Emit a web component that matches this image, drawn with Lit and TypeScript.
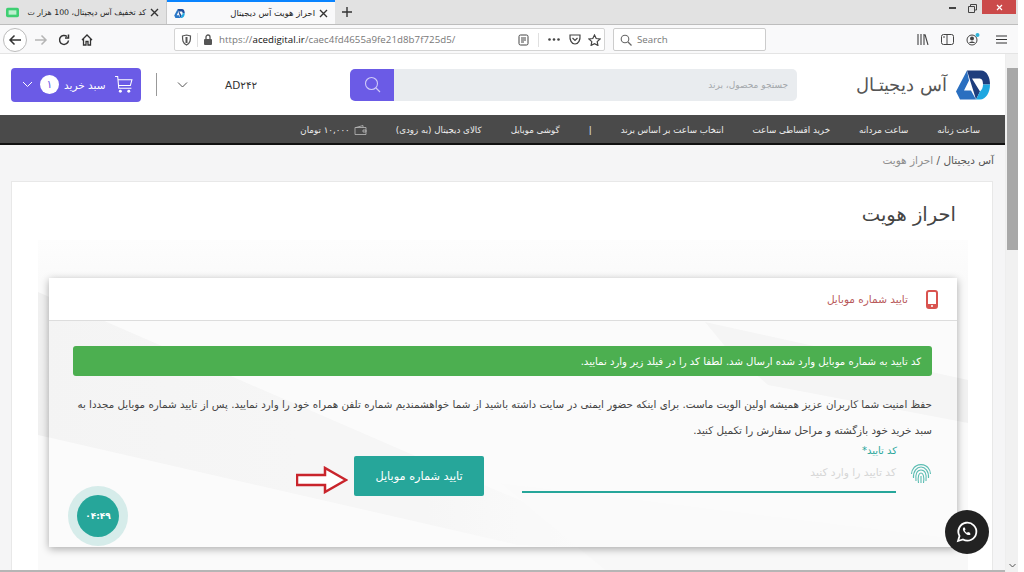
import { LitElement, html, css, svg } from "lit";
import { customElement } from "lit/decorators.js";

const x = svg`<path d="M2 2l7 7M9 2l-7 7" stroke="#333" stroke-width="1.4" fill="none"/>`;

@customElement("app-root")
export class AppRoot extends LitElement {
  static styles = css`
    :host { display: block; width: 1024px; height: 572px; overflow: hidden; background: #fff; font-family: "DejaVu Sans", sans-serif; position: relative; }
    svg { display: block; flex: none; }
    .win { width: 1018px; height: 572px; display: flex; flex-direction: column; }
    .tabs { height: 24px; background: #e2e2e2; display: flex; align-items: stretch; flex: none; position: relative; }
    .tab { width: 167px; display: flex; align-items: center; gap: 3px; padding: 0 6px; box-sizing: border-box; font-size: 8.5px; color: #222; border-right: 1px solid #c9c9c9; white-space: nowrap; overflow: hidden; }
    .tab.first { justify-content: flex-end; padding-left: 6px; }
    .tab.first .lbl { font-size: 7.8px; }
    .tab .lbl { flex: 1; text-align: right; }
    .tab.active { background: #f9f9fa; border-top: 2px solid #0a84ff; border-right: none; width: 168px; padding-left: 7px; }
    .plus { margin: 0 0 0 6px; align-self: center; }
    .winctl { margin-left: auto; display: flex; align-items: flex-start; }
    .close { width: 34px; height: 14px; background: #cb4a4a; display: flex; align-items: center; justify-content: center; margin-right: 2px; }
    .min { margin-top: 7px; }
    .rest { margin: 4px 5px 0 12px; }
    .toolbar { height: 30px; background: #f9f9fa; border-top: 1px solid #bdbdbd; border-bottom: 1px solid #e4e4e4; box-sizing: border-box; display: flex; align-items: center; flex: none; font-size: 9.7px; font-family: "Open Sans", sans-serif; color: #777; padding-top: 1px; }
    .circ { width: 24px; height: 24px; border: 1px solid #bbb; border-radius: 50%; box-sizing: border-box; margin-left: 3px; display: flex; align-items: center; justify-content: center; background: #fff; }
    .tb { margin-left: 9px; }
    .urlbar { width: 431px; height: 23px; border: 1px solid #d4d4d4; background: #fff; border-radius: 2px; box-sizing: border-box; display: flex; align-items: center; margin-left: 81px; }
    .url { margin-left: 6px; flex: 1; white-space: nowrap; letter-spacing: .05px; }
    .url b { color: #111; font-weight: 400; }
    .sep { width: 1px; height: 14px; background: #e0e0e0; }
    .search { width: 153px; height: 23px; margin-left: 8px; border: 1px solid #ccc; background: #fff; border-radius: 2px; box-sizing: border-box; display: flex; align-items: center; gap: 5px; padding-left: 6px; }
    .tright { margin-left: auto; display: flex; align-items: center; gap: 12px; padding-right: 11px; }

    .view { flex: 1; display: flex; min-height: 0; }
    .page { flex: 1; min-width: 0; background: #f5f5f6; position: relative; overflow: hidden; border-bottom: 2px solid #b5b5b5; box-sizing: border-box; }
    .sb { width: 13px; background: #f1f1f1; flex: none; display: flex; flex-direction: column; align-items: center; border-left: 1px solid #eee; box-sizing: border-box; position: relative; }
    .sb .thumb { width: 11px; height: 182px; background: #a8a8a8; margin-top: 14px; }
    .sb .down { margin-top: auto; margin-bottom: 4px; }

    .head { height: 61px; background: #fff; display: flex; align-items: center; padding: 0 15px 0 11px; box-sizing: border-box; }
    .cart { width: 130px; height: 34px; background: #6b5be6; border-radius: 4px; color: #fff; display: flex; align-items: center; padding: 0 10px 0 11px; box-sizing: border-box; gap: 5px; font-size: 10.5px; white-space: nowrap; }
    .cart .clbl { flex: none; }
    .badge { width: 19px; height: 19px; flex: none; border-radius: 50%; background: #fff; color: #6b5be6; font-size: 11px; display: flex; align-items: center; justify-content: center; }
    .vline { width: 1px; height: 23px; background: #999; margin-left: 15px; }
    .chev2 { margin-left: 20px; }
    .user { margin-left: 37px; font-size: 10.5px; color: #333; width: 125px; }
    .sform { width: 447px; height: 32px; display: flex; border-radius: 5px; overflow: hidden; }
    .sbtn { width: 44px; background: #6b5be6; display: flex; align-items: center; justify-content: center; }
    .sinp { flex: 1; background: #e9ecef; display: flex; align-items: center; padding-right: 9px; font-size: 9px; color: #a4a8ac; direction: rtl; justify-content: flex-start; }
    .logo { margin-left: auto; display: flex; align-items: center; gap: 9px; }
    .logotxt { font-size: 17.5px; font-weight: 200; color: #555; direction: rtl; white-space: nowrap; }

    .nav { height: 30px; background: #4a4a4a; border-bottom: 2px solid #111; box-sizing: border-box; display: flex; flex-direction: row; direction: rtl; align-items: center; gap: 29px; padding: 1px 25px 0 0; color: #eee; font-size: 8.7px; white-space: nowrap; }
    .wallet { display: flex; align-items: center; gap: 4px; }
    .crumb { direction: rtl; font-size: 10.5px; color: #555; padding: 9px 11px 0 0; height: 36px; box-sizing: border-box; }
    .crumb span { color: #8f8f8f; }
    .card { margin: 0 12px 0 11px; height: 500px; background: #fff; border: 1px solid #e8e8e8; box-sizing: border-box; padding: 0 24px 0 26px; }
    .title { height: 58px; direction: rtl; font-size: 19.5px; color: #444; padding: 21px 12px 0 0; box-sizing: border-box; }
    .zone { position: relative; height: 440px; padding: 38px 11px 0; box-sizing: border-box; background: linear-gradient(#fdfdfd, #fafafa 40px); }
    .shapes { position: absolute; left: 0; top: 0; }
    .panel { position: relative; height: 269px; background: rgba(255,255,255,.3); box-shadow: 0 2px 8px rgba(0,0,0,.32); direction: rtl; }
    .phead { height: 43px; background: #fff; border-bottom: 1px solid #ddd; box-sizing: border-box; display: flex; align-items: center; gap: 18px; padding-right: 19px; font-size: 10.5px; color: #b8595a; }
    .pbody { padding: 25px 25px 0 24px; }
    .alert { height: 30px; background: #4caf50; border-radius: 3px; color: #fff; font-size: 10.1px; display: flex; align-items: center; padding-right: 11px; white-space: nowrap; }
    .txt { margin: 15px 0 0; font-size: 10.35px; line-height: 26px; color: #444; white-space: nowrap; }
    .row { display: flex; align-items: flex-start; margin-top: 1px; }
    .fp { margin-top: 18px; margin-left: 14px; }
    .field { width: 374px; height: 48px; border-bottom: 2px solid #26a69a; box-sizing: border-box; margin-top: 1px; }
    .flabel { font-size: 10px; color: #26a69a; margin-right: -1px; line-height: 12px; }
    .ph { font-size: 10.7px; color: #d6d6d6; margin-top: 9px; }
    .btn { width: 130px; height: 40px; background: #26a69a; border-radius: 2px; color: #fff; font-size: 11.3px; display: flex; align-items: center; justify-content: center; margin: 12px 38px 0 6px; }
    .arrow { margin-top: 22px; }
    .timer { position: absolute; left: 19px; bottom: 1px; width: 60px; height: 60px; border-radius: 50%; background: #d6ecea; display: flex; align-items: center; justify-content: center; direction: ltr; }
    .timer div { width: 42px; height: 42px; border-radius: 50%; background: #26a69a; color: #fff; font-size: 9px; font-weight: 700; display: flex; align-items: center; justify-content: center; }
    .wa { position: absolute; left: 945px; top: 456px; width: 44px; height: 44px; border-radius: 50%; background: #222; display: flex; align-items: center; justify-content: center; }
  `;

  render() {
    return html`<div class="win">
      <div class="tabs">
        <div class="tab first">
          <svg width="13" height="11" viewBox="0 0 15 11"><rect width="15" height="11" rx="2" fill="#3ecf72"/><rect x="3" y="3" width="9" height="5" fill="#bdf0cf"/></svg>
          <span class="lbl" dir="rtl">کد تخفیف آس دیجیتال، 100 هزار ت</span>
          <svg width="11" height="11" viewBox="0 0 11 11">${x}</svg>
        </div>
        <div class="tab active">
          <svg width="11" height="9" viewBox="0 0 34 29"><path d="M11 0H25C31 0 34 7 34 14L27 14C27 10 26 8 23 8H16L24 21 20 29Z" fill="#1f4e9e"/><path d="M11 0L0 21 4 29H20L15 20H8L13 10Z" fill="#2a78c8"/><path d="M34 14C34 22 30 29 24 29H20L24 21C26 19 27 17 27 14Z" fill="#1ea7e1"/></svg>
          <span class="lbl" dir="rtl">احراز هویت آس دیجیتال</span>
          <svg width="11" height="11" viewBox="0 0 11 11">${x}</svg>
        </div>
        <svg class="plus" width="12" height="12" viewBox="0 0 12 12"><path d="M6 1v10M1 6h10" stroke="#333" stroke-width="1.4"/></svg>
        <div class="winctl">
          <svg class="min" width="7" height="3" viewBox="0 0 7 3"><rect y="0" width="7" height="2" fill="#444"/></svg>
          <svg class="rest" width="9" height="9" viewBox="0 0 9 9"><path d="M2.500 2.500V.5h6v5.500h-2M.5 2.500h6v6h-6z" fill="none" stroke="#444"/></svg>
          <div class="close"><svg width="9" height="9" viewBox="0 0 9 9"><path d="M2 2l5 5M7 2l-5 5" stroke="#fff" stroke-width="1.2"/></svg></div>
        </div>
      </div>
      <div class="toolbar">
        <div class="circ"><svg width="14" height="12" viewBox="0 0 14 12"><path d="M13 6H2M6.500 1.500L2 6l4.500 4.500" fill="none" stroke="#333" stroke-width="1.500"/></svg></div>
        <svg class="tb" style="margin-left:7px" width="14" height="12" viewBox="0 0 14 12"><path d="M1 6h11M7.500 1.500L12 6l-4.500 4.500" fill="none" stroke="#b5b5b5" stroke-width="1.500"/></svg>
        <svg class="tb" style="margin-left:10px" width="12" height="12" viewBox="0 0 12 12"><path d="M10.500 6.500A4.500 4.500 0 1 1 9 2.500M10.500 .5v3.500H7" fill="none" stroke="#333" stroke-width="1.500"/></svg>
        <svg class="tb" style="margin-left:11px" width="12" height="12" viewBox="0 0 12 12"><path d="M1 6l5-5 5 5M2.500 5v6h2.500V7.500h2V11h2.500V5" fill="none" stroke="#333" stroke-width="1.300"/></svg>
        <div class="urlbar">
          <svg style="margin-left:6px" width="11" height="12" viewBox="0 0 11 12"><path d="M1.500 2L5.500 1l4 1c0 4 0 7-4 9-4-2-4-5-4-9z" fill="none" stroke="#555" stroke-width="1.200"/><path d="M5.500 3v6" stroke="#555" stroke-width="2"/></svg>
          <div class="sep" style="margin-left:5px"></div>
          <svg style="margin-left:5px" width="10" height="11" viewBox="0 0 10 11"><rect x="1" y="5" width="8" height="6" rx="1" fill="#555"/><path d="M3 5V3a2 2 0 0 1 4 0v2" fill="none" stroke="#555" stroke-width="1.300"/></svg>
          <div class="url">https://<b>acedigital.ir</b>/caec4fd4655a9fe21d8b7f725d5/</div>
          <svg width="11" height="12" viewBox="0 0 11 12" style="margin-right:9px"><rect x="1" y="1" width="9" height="10" rx="1.500" fill="none" stroke="#444"/><path d="M3 4h5M3 6h5M3 8h3" stroke="#444"/></svg>
          <div class="sep" style="margin-right:9px"></div>
          <svg width="12" height="3" viewBox="0 0 12 3" style="margin-right:9px"><circle cx="1.500" cy="1.500" r="1.300" fill="#444"/><circle cx="6" cy="1.500" r="1.300" fill="#444"/><circle cx="10.500" cy="1.500" r="1.300" fill="#444"/></svg>
          <svg width="12" height="11" viewBox="0 0 12 11" style="margin-right:7px"><path d="M1 1h10c.5 5-1.500 9-5 9s-5.500-4-5-9z" fill="none" stroke="#444" stroke-width="1.200"/><path d="M3.500 4L6 6.500 8.500 4" fill="none" stroke="#444" stroke-width="1.200"/></svg>
          <svg width="13" height="12" viewBox="0 0 13 12" style="margin-right:3px"><path d="M6.500 1l1.700 3.500 3.800.5-2.800 2.600.7 3.800-3.400-1.800-3.400 1.800.7-3.800L1 5l3.800-.5z" fill="none" stroke="#444" stroke-width="1.200"/></svg>
        </div>
        <div class="search">
          <svg width="12" height="12" viewBox="0 0 12 12"><circle cx="5" cy="5" r="3.800" fill="none" stroke="#666" stroke-width="1.100"/><path d="M8 8l3.500 3.500" stroke="#666" stroke-width="1.200"/></svg>
          Search
        </div>
        <div class="tright">
          <svg width="12" height="11" viewBox="0 0 12 11"><path d="M1 0v11M4 0v11M7 0v11M8 .5l3 10.500" stroke="#444" stroke-width="1.100"/></svg>
          <svg width="13" height="11" viewBox="0 0 13 11"><rect x=".5" y=".5" width="12" height="10" rx="2" fill="none" stroke="#444"/><path d="M6 1v9M2 3h2" stroke="#444"/></svg>
          <svg width="14" height="13" viewBox="0 0 14 13"><circle cx="6" cy="7" r="5" fill="none" stroke="#444"/><circle cx="6" cy="5.500" r="2" fill="#444"/><path d="M3 10c1-2 5-2 6 0" fill="#444"/><circle cx="11.500" cy="2" r="2" fill="#2eb3d8"/></svg>
          <svg style="margin-left:4px" width="11" height="9" viewBox="0 0 11 9"><path d="M0 1h11M0 4.500h11M0 8h11" stroke="#333" stroke-width="1.200"/></svg>
        </div>
      </div>
      <div class="view">
        <div class="page">
          <div class="head">
            <div class="cart">
              <svg width="11" height="7" viewBox="0 0 11 7"><path d="M1 1l4.500 4.500L10 1" fill="none" stroke="#fff"/></svg>
              <div class="badge" style="margin-left:2px">۱</div>
              <span class="clbl" dir="rtl">سبد خرید</span>
              <svg style="margin-left:3px" width="19" height="20" viewBox="0 0 18 18"><path d="M1 1h2.500l1 11h12M4 4h13l-1.500 5.500H4.500" fill="none" stroke="#fff"/><circle cx="6" cy="15" r="1.400" fill="#fff"/><circle cx="14" cy="15" r="1.400" fill="#fff"/></svg>
            </div>
            <div class="vline"></div>
            <svg class="chev2" width="11" height="6" viewBox="0 0 11 6"><path d="M1 .5l4.500 4.500L10 .5" fill="none" stroke="#555"/></svg>
            <div class="user">AD۲۴۲</div>
            <div class="sform">
              <div class="sbtn"><svg width="17" height="17" viewBox="0 0 17 17"><circle cx="7.500" cy="7.500" r="6" fill="none" stroke="#cfcaf8" stroke-width="1.100"/><path d="M12 12l4 4" stroke="#cfcaf8" stroke-width="1.100"/></svg></div>
              <div class="sinp">جستجو محصول، برند</div>
            </div>
            <div class="logo">
              <span class="logotxt">آس دیجیتـال</span>
              <svg width="34" height="30" viewBox="0 0 34 29">
                <path d="M11 0L0 21 4 29H20L15 20H8L13 10Z" fill="#2a6fc0"/>
                <path d="M11 0H25C31 0 34 7 34 14L27 14C27 10 26 8 23 8H16L24 21 20 29Z" fill="#1e3d7d"/>
                <path d="M34 14C34 22 30 29 24 29H20L24 21C26 19 27 17 27 14Z" fill="#1ea7e1"/>
              </svg>
            </div>
          </div>
          <div class="nav">
            <span>ساعت زنانه</span><span>ساعت مردانه</span><span>خرید اقساطی ساعت</span><span>انتخاب ساعت بر اساس برند</span><span>|</span><span>گوشی موبایل</span><span>کالای دیجیتال (به زودی)</span>
            <span class="wallet"><svg width="13" height="10" viewBox="0 0 13 10"><path d="M1 2.500h11v7H1zM2 2.500L9 .5v2M9 5h3v2H9z" fill="none" stroke="#bbb" stroke-width=".8"/></svg>۱۰,۰۰۰ تومان</span>
          </div>
          <div class="crumb">آس دیجیتال / <span>احراز هویت</span></div>
          <div class="card">
            <div class="title">احراز هویت</div>
            <div class="zone">
              <svg class="shapes" width="930" height="440" viewBox="0 0 930 440">
                <defs><linearGradient id="w" x1="0" x2="1" y1="0" y2="0"><stop offset="0" stop-color="#f0f0f0"/><stop offset=".65" stop-color="#f3f3f3"/><stop offset="1" stop-color="#fafafa"/></linearGradient></defs>
                <path d="M0 52L202 140 380 217 600 310 480 305 0 195Z" fill="url(#w)"/>
                <path d="M667 82L930 140V183L730 145 690 110Z" fill="#f1f1f1"/>
                <path d="M462 243L930 300V440H700Z" fill="#f8f8f8"/>
              </svg>
              <div class="panel">
                <div class="phead">
                  <svg width="12" height="19" viewBox="0 0 12 19"><rect x="1" y="1" width="10" height="17" rx="2" fill="none" stroke="#d9534f" stroke-width="2"/><rect x="1" y="14" width="10" height="4" fill="#d9534f"/><circle cx="6" cy="16" r="1" fill="#fff"/></svg>
                  <span>تایید شماره موبایل</span>
                </div>
                <div class="pbody">
                  <div class="alert">کد تایید به شماره موبایل وارد شده ارسال شد. لطفا کد را در فیلد زیر وارد نمایید.</div>
                  <p class="txt">حفظ امنیت شما کاربران عزیز همیشه اولین الویت ماست. برای اینکه حضور ایمنی در سایت داشته باشید از شما خواهشمندیم شماره تلفن همراه خود را وارد نمایید. پس از تایید شماره موبایل مجددا به<br>سبد خرید خود بازگشته و مراحل سفارش را تکمیل کنید.</p>
                  <div class="row">
                    <svg class="fp" width="22" height="22" viewBox="0 0 22 22" fill="none" stroke="#5cbdb3" stroke-width="1.100">
                      <path d="M3 7A9.500 9.500 0 0 1 19 7M1.500 12A9.500 9.500 0 0 1 20.500 12"/>
                      <path d="M3.500 16C3 9 7 5 11 5s8 4 7.500 11M6 19C5 12 7 8 11 8s6 4 5 11M8.500 21C7.500 14 9 11 11 11s3.500 3 2.500 10M11 14v7"/>
                    </svg>
                    <div class="field">
                      <div class="flabel">کد تایید*</div>
                      <div class="ph">کد تایید را وارد کنید</div>
                    </div>
                    <div class="btn">تایید شماره موبایل</div>
                    <svg class="arrow" width="52" height="28" viewBox="0 0 52 28"><path d="M1 9h28V2l21 12-21 12v-7H1z" fill="#fff" stroke="#c9252c" stroke-width="2.500"/></svg>
                  </div>
                </div>
                <div class="timer"><div>۰۴:۴۹</div></div>
              </div>
            </div>
          </div>
          <div class="wa">
            <svg width="24" height="24" viewBox="0 0 24 24"><path d="M3 21l1.500-5A9 9 0 1 1 8 19.500z" fill="none" stroke="#fff" stroke-width="1.800"/><path d="M8.500 7.500c-1 1-1 3 1.500 5.500s4.500 2.500 5.500 1.500l-.500-1.800-2-.7-1 .8c-1-.3-2-1.500-2.300-2.300l.8-1-.7-2z" fill="#fff"/></svg>
          </div>
        </div>
        <div class="sb">
          <div class="thumb"></div>
          <svg class="down" width="7" height="5" viewBox="0 0 7 5"><path d="M.5 1l3 3 3-3" fill="none" stroke="#555"/></svg>
        </div>
      </div>
    </div>`;
  }
}
